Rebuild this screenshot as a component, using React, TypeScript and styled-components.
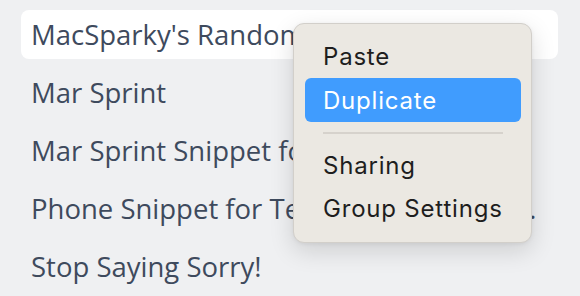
import React from "react";
import styled, { createGlobalStyle } from "styled-components";

const Global = createGlobalStyle`
  html, body { margin: 0; padding: 0; background: #eff0f2; }
  body { width: 580px; height: 296px; overflow: hidden; }
`;

const Page = styled.div`
  position: relative;
  width: 580px;
  height: 296px;
  box-sizing: border-box;
  padding: 10px 22px 0 21px;
  background: #eff0f2;
`;

const List = styled.div`
  display: flex;
  flex-direction: column;
  gap: 9px;
`;

const Row = styled.div<{ $selected?: boolean }>`
  height: 49px;
  display: flex;
  align-items: center;
  padding: 0 16px 0 10px;
  border-radius: 8px;
  background: ${(p) => (p.$selected ? "#ffffff" : "transparent")};
  font-family: "Open Sans", "DejaVu Sans", sans-serif;
  font-size: 27.5px;
  color: #3e4a5d;
  white-space: nowrap;
  overflow: hidden;
  min-width: 0;
`;

const RowText = styled.span`
  display: block;
  overflow: hidden;
  text-overflow: ellipsis;
  white-space: nowrap;
`;

const Menu = styled.div`
  position: absolute;
  left: 293px;
  top: 23px;
  width: 239px;
  box-sizing: border-box;
  padding: 11px 10px 12px 11px;
  background: #ebe8e2;
  border: 1px solid #d2cfca;
  border-radius: 11px;
  box-shadow: 0 8px 24px rgba(0, 0, 0, 0.14), 0 1px 4px rgba(0, 0, 0, 0.06);
  font-family: Inter, "Liberation Sans", sans-serif;
`;

const Item = styled.div<{ $active?: boolean }>`
  height: ${(p) => (p.$active ? 44 : 43)}px;
  display: flex;
  align-items: center;
  padding: 0 18px;
  border-radius: 6px;
  font-size: 24px;
  letter-spacing: 0.8px;
  color: ${(p) => (p.$active ? "#ffffff" : "#1e1e1e")};
  background: ${(p) => (p.$active ? "#409cfe" : "transparent")};
`;

const Separator = styled.div`
  height: 22px;
  display: flex;
  align-items: center;
  padding: 0 18px;
  &::after {
    content: "";
    flex: 1;
    height: 2px;
    background: #d6d2cc;
  }
`;

const rows = [
  "MacSparky's Random Snippets",
  "Mar Sprint",
  "Mar Sprint Snippet for Testing",
  "Phone Snippet for Testing Things Out Now",
  "Stop Saying Sorry!",
];

export default function App() {
  return (
    <Page>
      <Global />
      <List>
        {rows.map((r, i) => (
          <Row key={r} $selected={i === 0}>
            <RowText>{r}</RowText>
          </Row>
        ))}
      </List>
      <Menu>
        <Item>Paste</Item>
        <Item $active>Duplicate</Item>
        <Separator />
        <Item>Sharing</Item>
        <Item>Group Settings</Item>
      </Menu>
    </Page>
  );
}
